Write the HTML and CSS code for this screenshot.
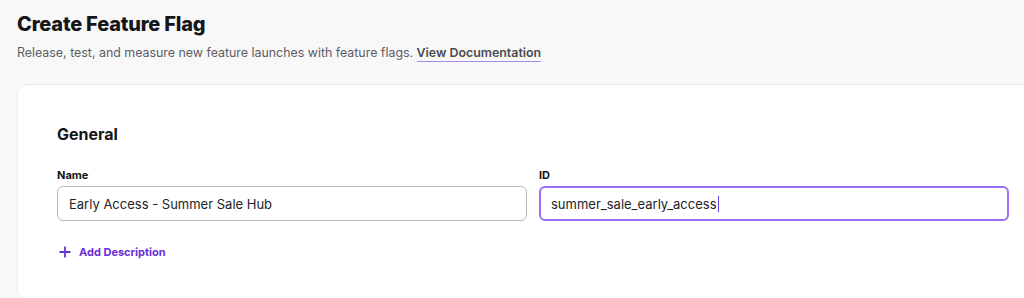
FILE: index.html
```html
<!DOCTYPE html>
<html>
<head>
<meta charset="utf-8">
<link rel="stylesheet" href="styles.css">
</head>
<body>
<div class="page">
  <header class="head">
    <h1 class="title">Create Feature Flag</h1>
    <p class="subtitle">Release, test, and measure new feature launches with feature flags. <a class="doc-link" href="#">View Documentation</a></p>
  </header>
  <section class="card">
    <h2 class="section-title">General</h2>
    <div class="fields">
      <div class="field">
        <label class="label">Name</label>
        <div class="input">Early Access - Summer Sale Hub</div>
      </div>
      <div class="field">
        <label class="label">ID</label>
        <div class="input input-focus">summer_sale_early_access<span class="caret"></span></div>
      </div>
    </div>
    <button class="add-desc">
      <svg class="plus" width="12" height="12" viewBox="0 0 12 12"><path d="M6 0.5v11M0.5 6h11" stroke="currentColor" stroke-width="1.8" fill="none"/></svg>
      Add Description
    </button>
  </section>
</div>
</body>
</html>
```

FILE: styles.css
```css
html, body {
  margin: 0;
  padding: 0;
  overflow: hidden;
}
body {
  background: #f8f8f8;
  font-family: Inter, "Noto Sans", sans-serif;
  color: #15161a;
  width: 1024px;
  height: 298px;
}
.page {
  padding: 10px 0 0 17px;
}
.head {
  display: flex;
  flex-direction: column;
}
.title {
  margin: 0;
  font-size: 20px;
  font-weight: 800;
  line-height: 28px;
  letter-spacing: -0.2px;
  color: #15161a;
}
.subtitle {
  margin: 6px 0 0;
  font-size: 12.4px;
  line-height: 18px;
  color: #5b5d63;
}
.doc-link {
  color: #4a4c52;
  font-weight: 600;
  text-decoration: none;
  border-bottom: 1px solid #a98af0;
  padding-bottom: 1px;
}
.card {
  margin-top: 22px;
  width: 1032px;
  height: 216px;
  box-sizing: border-box;
  background: #fff;
  border: 1px solid #ececec;
  border-radius: 10px;
  padding: 38px 40px 0 39px;
}
.section-title {
  margin: 0;
  font-size: 16px;
  font-weight: 700;
  line-height: 22px;
  color: #15161a;
}
.fields {
  display: grid;
  grid-template-columns: 470px 470px;
  column-gap: 12px;
  margin-top: 23px;
}
.field {
  display: flex;
  flex-direction: column;
}
.label {
  font-size: 11px;
  font-weight: 700;
  line-height: 14px;
  color: #15161a;
  margin-bottom: 4px;
}
.input {
  height: 35px;
  box-sizing: border-box;
  border: 1px solid #b9b9bd;
  border-radius: 6px;
  padding: 0 11px;
  display: flex;
  align-items: center;
  font-size: 13px;
  color: #222327;
}
.input-focus {
  border: 2px solid #9d6ef7;
  padding: 0 10px;
}
.caret {
  display: inline-block;
  width: 1px;
  height: 16px;
  background: #6d3ce0;
  margin-left: 1px;
}
.add-desc {
  margin-top: 24px;
  display: flex;
  align-items: center;
  gap: 8px;
  background: none;
  border: 0;
  padding: 0 0 0 2px;
  font-family: inherit;
  font-size: 11px;
  font-weight: 700;
  color: #6b2fd6;
  cursor: pointer;
}
.plus {
  display: block;
}
```
